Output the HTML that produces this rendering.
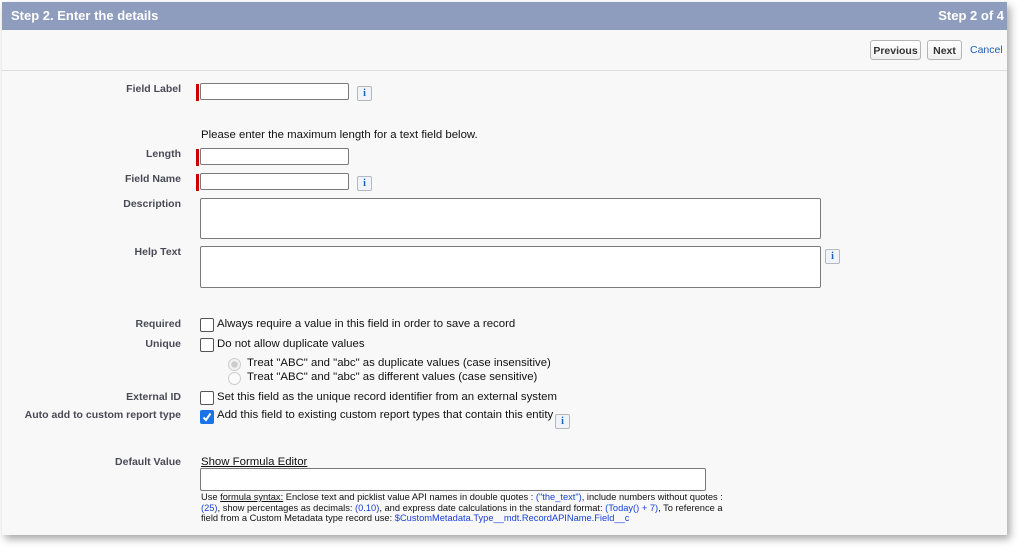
<!DOCTYPE html>
<html><head><meta charset="utf-8"><style>
body{margin:0;width:1023px;height:551px;background:#fff;position:relative;overflow:hidden;font-family:"Liberation Sans",Arial,sans-serif;}
#panel{position:absolute;left:2px;top:2px;width:1005px;height:533px;background:#f8f8f8;box-shadow:3px 4px 8px rgba(0,0,0,0.35);}
#hdr{position:absolute;left:0;top:0;width:1005px;height:28px;background:#8e9dbe;color:#fff;font-weight:bold;font-size:13px;}
.a{position:absolute;}
.lbl{position:absolute;right:826px;font-size:10.5px;font-weight:bold;color:#4a4a56;text-align:right;white-space:nowrap;}
.inp{position:absolute;height:17px;background:#fff;border:1px solid #7a7a7a;border-radius:2px;box-sizing:border-box;}
.req{position:absolute;width:3px;height:17px;background:#c00;}
.info{position:absolute;width:13px;height:13px;border:1px solid #b5b8bd;border-radius:2px;background:#f0f3f7;font-size:10px;font-weight:bold;color:#1a5fc4;text-align:center;line-height:13px;font-family:"Liberation Serif",serif;}
.t{position:absolute;font-size:11.4px;color:#111;white-space:nowrap;}
.cb{position:absolute;width:12px;height:12px;border:1px solid #555;border-radius:2px;background:#fff;}
.rd{position:absolute;width:11px;height:11px;border:1px solid #ccc;border-radius:50%;background:#fafafa;}
.btn{position:absolute;top:38px;height:20px;border:1px solid #b5b5b5;border-radius:3px;background:linear-gradient(#fff,#f0f0f0);font-size:10.5px;font-weight:bold;color:#333;line-height:20px;text-align:center;box-sizing:border-box;}
.ta{position:absolute;background:#fff;border:1px solid #7a7a7a;border-radius:2px;box-sizing:border-box;}
.b{color:#1a3fd6;}
</style></head><body>
<div id="panel">
<div id="hdr"><span class="a" style="left:9px;top:6px">Step 2. Enter the details</span><span class="a" style="right:3px;top:6px">Step 2 of 4</span></div>
<div class="a" style="left:0;top:68px;width:1005px;height:1px;background:#ddd"></div>
<div class="btn" style="left:868px;width:51px;top:38px">Previous</div>
<div class="btn" style="left:925px;width:35px">Next</div>
<span class="a" style="left:968px;top:42px;font-size:10.5px;color:#1d5eb5">Cancel</span>

<span class="lbl" style="top:81px">Field Label</span>
<div class="req" style="left:194px;top:82px"></div><div class="inp" style="left:198px;top:81px;width:149px"></div>
<div class="info" style="left:355px;top:84px">i</div>

<span class="t" style="left:199px;top:127px">Please enter the maximum length for a text field below.</span>
<span class="lbl" style="top:146px">Length</span>
<div class="req" style="left:194px;top:147px"></div><div class="inp" style="left:198px;top:146px;width:149px"></div>
<span class="lbl" style="top:171px">Field Name</span>
<div class="req" style="left:194px;top:172px"></div><div class="inp" style="left:198px;top:171px;width:149px"></div>
<div class="info" style="left:355px;top:174px">i</div>

<span class="lbl" style="top:196px">Description</span>
<div class="ta" style="left:198px;top:196px;width:621px;height:41px"></div>
<span class="lbl" style="top:244px">Help Text</span>
<div class="ta" style="left:198px;top:244px;width:621px;height:42px"></div>
<div class="info" style="left:823px;top:247px">i</div>

<span class="lbl" style="top:316px">Required</span>
<div class="cb" style="left:198px;top:316px"></div><span class="t" style="left:215px;top:316px">Always require a value in this field in order to save a record</span>
<span class="lbl" style="top:336px">Unique</span>
<div class="cb" style="left:198px;top:336px"></div><span class="t" style="left:215px;top:336px">Do not allow duplicate values</span>
<div class="rd" style="left:226px;top:356px;background:radial-gradient(circle,#ccc 0 3px,#f2f2f2 3.5px)"></div><span class="t" style="left:245px;top:355px">Treat "ABC" and "abc" as duplicate values (case insensitive)</span>
<div class="rd" style="left:226px;top:370px"></div><span class="t" style="left:245px;top:369px">Treat "ABC" and "abc" as different values (case sensitive)</span>
<span class="lbl" style="top:389px">External ID</span>
<div class="cb" style="left:198px;top:389px"></div><span class="t" style="left:215px;top:389px">Set this field as the unique record identifier from an external system</span>
<span class="lbl" style="top:407px">Auto add to custom report type</span>
<div class="cb" style="left:198px;top:408px;background:#1a73e8;border-color:#1a73e8"><svg width="12" height="12" viewBox="0 0 12 12" style="position:absolute;left:0;top:0"><path d="M2.5 6.5 L5 9 L9.5 2.5" stroke="#fff" stroke-width="2" fill="none"/></svg></div>
<span class="t" style="left:215px;top:407px">Add this field to existing custom report types that contain this entity</span>
<div class="info" style="left:553px;top:412px">i</div>

<span class="lbl" style="top:454px">Default Value</span>
<span class="t" style="left:199px;top:454px;text-decoration:underline">Show Formula Editor</span>
<div class="ta" style="left:198px;top:466px;width:506px;height:23px"></div>
<div class="a" style="left:199px;top:490px;width:522px;font-size:9.3px;line-height:10.5px;color:#111">Use <u>formula syntax:</u> Enclose text and picklist value API names in double quotes : <span class="b">("the_text")</span>, include numbers without quotes : <span class="b">(25)</span>, show percentages as decimals: <span class="b">(0.10)</span>, and express date calculations in the standard format: <span class="b">(Today() + 7)</span>, To reference a field from a Custom Metadata type record use: <span class="b">$CustomMetadata.Type__mdt.RecordAPIName.Field__c</span></div>
</div>
</body></html>
